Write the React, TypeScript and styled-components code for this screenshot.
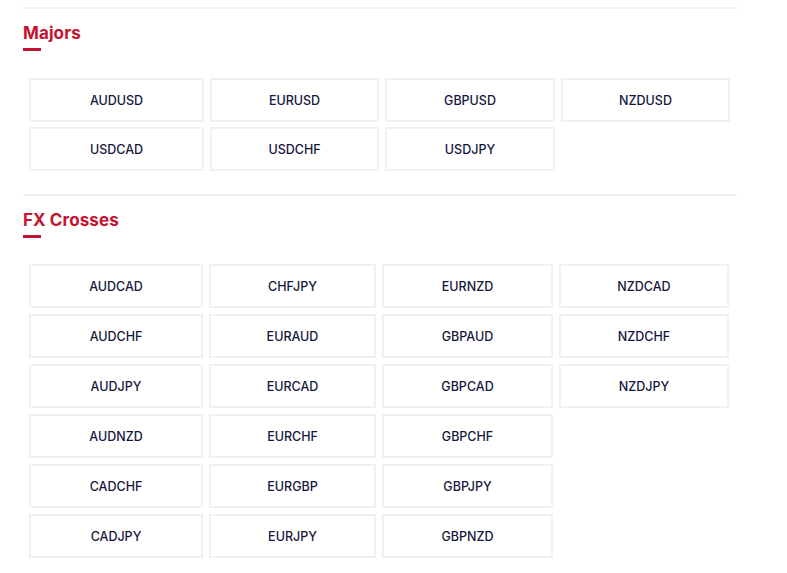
import React from "react";
import styled, { createGlobalStyle } from "styled-components";

const Global = createGlobalStyle`
  html, body { margin: 0; padding: 0; background: #ffffff; }
  body { font-family: Inter, "Noto Sans", Arial, sans-serif; }
`;

const Page = styled.div`
  width: 714px;
  padding: 7px 0 0 23px;
`;

const Section = styled.section<{ $gapAfter: number }>`
  border-top: 2px solid #f1f1f1;
  padding-top: 12px;
  margin-bottom: ${(p) => p.$gapAfter}px;
`;

const Heading = styled.h2`
  margin: 0;
  font-family: Inter, "Noto Sans", sans-serif;
  font-size: 17px;
  line-height: 24px;
  font-weight: 700;
  color: #c41230;
  letter-spacing: 0.1px;
`;

const Bar = styled.div`
  width: 18px;
  height: 3px;
  margin-top: 3px;
  background: #c41230;
`;

const Grid = styled.div<{ $cols: string; $rowGap: number; $top: number }>`
  display: grid;
  grid-template-columns: ${(p) => p.$cols};
  column-gap: 6px;
  row-gap: ${(p) => p.$rowGap}px;
  margin: ${(p) => p.$top}px 0 0 6px;
`;

const Pair = styled.div`
  height: 44px;
  box-sizing: border-box;
  border: 2px solid #f1f1f1;
  display: flex;
  align-items: center;
  justify-content: center;
  font-family: Inter, "Noto Sans", sans-serif;
  font-size: 12.5px;
  font-weight: 500;
  color: #15173d;
`;

const majors = ["AUDUSD", "EURUSD", "GBPUSD", "NZDUSD", "USDCAD", "USDCHF", "USDJPY"];

const crosses = [
  "AUDCAD", "CHFJPY", "EURNZD", "NZDCAD",
  "AUDCHF", "EURAUD", "GBPAUD", "NZDCHF",
  "AUDJPY", "EURCAD", "GBPCAD", "NZDJPY",
  "AUDNZD", "EURCHF", "GBPCHF", "",
  "CADCHF", "EURGBP", "GBPJPY", "",
  "CADJPY", "EURJPY", "GBPNZD", "",
];

export default function App() {
  return (
    <>
      <Global />
      <Page>
        <Section $gapAfter={23}>
          <Heading>Majors</Heading>
          <Bar />
          <Grid $cols="175px 169px 170px 169px" $rowGap={5} $top={27}>
            {majors.map((m) => (
              <Pair key={m}>{m}</Pair>
            ))}
          </Grid>
        </Section>
        <Section $gapAfter={0}>
          <Heading>FX Crosses</Heading>
          <Bar />
          <Grid $cols="174px 167px 171px 170px" $rowGap={6} $top={26}>
            {crosses.map((m, i) => (m ? <Pair key={m}>{m}</Pair> : <div key={"e" + i} />))}
          </Grid>
        </Section>
      </Page>
    </>
  );
}
